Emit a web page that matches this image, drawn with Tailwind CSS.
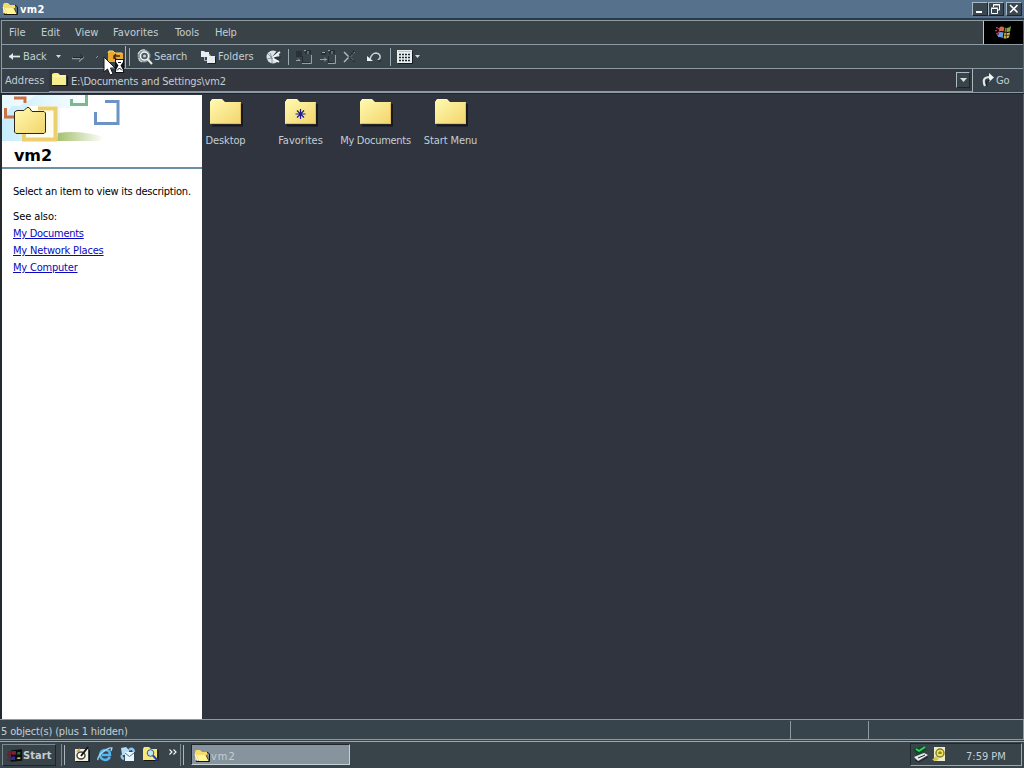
<!DOCTYPE html>
<html lang="en">
<head>
  <meta charset="UTF-8">
  <title>vm2</title>
  <script src="https://cdn.jsdelivr.net/npm/@tailwindcss/browser@4"></script>
</head>
<body class="w-[1024px] h-[768px] overflow-hidden flex flex-col bg-[#374249] text-[#c3ced4] text-[11px] leading-[13px] font-['DejaVu_Sans_Condensed','DejaVu_Sans',sans-serif] whitespace-nowrap">

  <!-- Shared shapes -->
  <svg class="absolute w-0 h-0">
    <defs>
      <linearGradient id="paper" x1="0" y1="0" x2="1" y2="1">
        <stop offset="0" stop-color="#fffbb0"/>
        <stop offset="1" stop-color="#f3d36c"/>
      </linearGradient>
      <linearGradient id="grass" x1="0" y1="0" x2="1" y2="0">
        <stop offset="0" stop-color="#a3c06c"/>
        <stop offset="1" stop-color="#ffffff"/>
      </linearGradient>
      <linearGradient id="sky" x1="0" y1="0" x2="1" y2="0">
        <stop offset="0" stop-color="#c5edfb"/>
        <stop offset="1" stop-color="#ffffff"/>
      </linearGradient>
    </defs>
    <symbol id="folder" viewBox="0 0 34 30">
      <path d="M3 27.500H33V6" fill="none" stroke="#171a1d" stroke-width="2"/>
      <path d="M1 26V4L3 1H13L16 4H32V26Z" fill="url(#paper)"/>
      <path d="M1.500 25.500H31.500V5" fill="none" stroke="#e0bd5f"/>
      <path d="M1.500 4.500L3.500 1.500H12.500L15 4.500" fill="none" stroke="#fff8cf"/>
    </symbol>
    <symbol id="open-folder" viewBox="0 0 16 14">
      <path d="M1 11V3L2 1H6L8 3H13V11Z" fill="#f6dc6d"/>
      <path d="M3 6H12L15 12H5Z" fill="#fff796"/>
      <path d="M2 12.500H15.500V5L13 3" fill="none" stroke="#16140a"/>
      <path d="M1 5L4 12" stroke="#fffad2" fill="none"/>
      <path d="M12 6L15 12" stroke="#4c4418" fill="none"/>
    </symbol>
    <symbol id="flag" viewBox="0 0 18 16">
      <path d="M1 3h2M0 6h2M1 9h2M3 4h2M3 8h2M2 11h2" stroke="#a44452" stroke-width="1.500"/>
      <path d="M5 2Q8 1 10 3L9 7Q7 6 4 7Z" fill="#dc654b"/>
      <path d="M11 3Q14 4 17 1L16 7Q13 8 10 7Z" fill="#81a844"/>
      <path d="M4 8Q6 7 9 8L8 14Q6 12 3 13Z" fill="#6a9ae0"/>
      <path d="M10 8Q13 9 16 8L15 13Q12 15 9 14Z" fill="#cfb443"/>
      <path d="M12 3.500V14M10 11H16" stroke="#2b260c" stroke-width=".8"/>
    </symbol>
    <symbol id="down" viewBox="0 0 5 3"><path d="M0 0H5L2.500 3Z" fill="#d5dde2"/></symbol>
  </svg>

  <!-- Title bar -->
  <header class="h-5 flex items-start bg-[#56718b] border-b-2 border-[#2b394a] shrink-0">
    <svg class="w-4 h-3.5 ml-[2px] mt-[2px]"><use href="#open-folder"/></svg>
    <b class="ml-[2px] mt-[3px] text-white tracking-[0.4px]">vm2</b>
    <div class="ml-auto mr-[2px] mt-[2px] flex">
      <span class="w-4 h-[14px] bg-[#3b4750] border border-t-[#a9bac4] border-l-[#a9bac4] border-r-[#1d252b] border-b-[#1d252b]">
        <svg class="w-[14px] h-3" viewBox="0 0 14 12"><path d="M3 9h6" stroke="#fff" stroke-width="2"/></svg>
      </span>
      <span class="w-4 h-[14px] bg-[#3b4750] border border-t-[#a9bac4] border-l-[#a9bac4] border-r-[#1d252b] border-b-[#1d252b]">
        <svg class="w-[14px] h-3" viewBox="0 0 14 12"><path d="M4.500 4V1.500H10.500V7H8.500M4 2h7M2.500 5.500H8.500V10.500H2.500ZM2 5h7" stroke="#fff" fill="none"/></svg>
      </span>
      <span class="w-4 h-[14px] ml-[2px] bg-[#3b4750] border border-t-[#a9bac4] border-l-[#a9bac4] border-r-[#1d252b] border-b-[#1d252b]">
        <svg class="w-[14px] h-3" viewBox="0 0 14 12"><path d="M3 2L10.500 9.500M10.500 2L3 9.500" stroke="#fff" stroke-width="1.600"/></svg>
      </span>
    </div>
  </header>

  <div class="h-[73px] border border-[#8b9aa3] border-r-[#56636c] shrink-0 ml-px flex flex-col">
    <!-- Menu bar -->
    <nav class="h-[24px] flex items-start border-b border-[#8b9aa3] pl-[7px] bg-[#394347] shrink-0">
      <span class="w-8 mt-[5px]">File</span>
      <span class="w-[34px] mt-[5px]">Edit</span>
      <span class="w-[38px] mt-[5px]">View</span>
      <span class="w-[62px] mt-[5px] tracking-[0.1px]">Favorites</span>
      <span class="w-[40px] mt-[5px]">Tools</span>
      <span class="mt-[5px] tracking-[-0.3px]">Help</span>
      <div class="ml-auto w-[40px] h-[23px] bg-black border-l border-[#b9c6cd] flex items-center justify-center">
        <svg class="w-[17px] h-[15px]"><use href="#flag"/></svg>
      </div>
    </nav>

    <!-- Toolbar -->
    <div class="h-6 flex items-center border-b border-[#8b9aa3] bg-[#38444a] pl-[6px] shrink-0">
      <svg class="w-[13px] h-3" viewBox="0 0 13 12"><path d="M1 5.500H12" stroke="#e3eaee" stroke-width="1.700" fill="none"/><path d="M1 5.500L5 2V9Z" fill="#e3eaee"/></svg>
      <span class="ml-[2px] w-[33px] tracking-[-0.1px]">Back</span>
      <svg class="w-[5px] h-[3px]"><use href="#down"/></svg>
      <svg class="ml-[11px] w-[13px] h-3" viewBox="0 0 13 12"><path d="M0 7.500H8M7 10.500L12 6" stroke="#8a979d" stroke-width="1.300" fill="none"/><path d="M1 6.500H11L8 3" stroke="#1f282c" fill="none"/></svg>
      <svg class="ml-[11px] w-[3px] h-[5px]" viewBox="0 0 3 5"><path d="M0 4L2 2" stroke="#8a979d"/></svg>
      <div class="ml-[5px] w-[22px] h-[22px] border-r border-[#a9b6bd] flex items-center pl-[3px]">
        <svg class="w-[17px] h-[14px]" viewBox="0 0 17 14"><path d="M1 12V3L2 1H6L8 3H16V12Z" fill="#e9a932"/><path d="M1 3L2 1H6L8 3H15" stroke="#ffd66b" fill="none"/><path d="M7 9V6H13M9 4L7 6.500L9 9" stroke="#4a2a08" stroke-width="1.500" fill="none"/></svg>
      </div>
      <div class="ml-[3px] w-px h-[18px] bg-[#9aa8b0]"></div>
      <svg class="ml-[7px] w-4 h-4" viewBox="0 0 16 16"><circle cx="7" cy="7" r="6.500" fill="#8d999e"/><path d="M1 5Q3 0 8 1M2 9Q1 12 5 13" stroke="#e8eef0" fill="none"/><circle cx="7.500" cy="7" r="4" fill="#4b575d" stroke="#f2f5f6" stroke-width="1.500"/><circle cx="7.500" cy="7" r="1.500" fill="#c6d0d4"/><path d="M10.500 10L15 15" stroke="#e6ecef" stroke-width="2"/></svg>
      <span class="ml-[1px] w-[47px] tracking-[-0.15px]">Search</span>
      <svg class="w-[15px] h-[14px]" viewBox="0 0 15 14"><path d="M0 1h3l1 1h4v5H0ZM6 5h3l1 1h4v7H6Z" fill="#e6ecef"/><path d="M3.500 7V10.500H6M8.500 4V6" stroke="#aab5ba" fill="none"/><path d="M14.500 7V13.500H7" stroke="#1b2226" fill="none"/></svg>
      <span class="ml-[2px] w-[47px]">Folders</span>
      <svg class="w-[17px] h-4" viewBox="0 0 17 16"><circle cx="8" cy="8" r="6.500" fill="#dce4e7"/><path d="M8 8L12 3M8 9L15 8L13 11Z" stroke="#2c363b" stroke-width="1.500" fill="#2c363b"/><path d="M7 9L15 3M8 9.500L14 13" stroke="#f3f6f7" stroke-width="1.800"/><path d="M7 9L5 4M7 9V14M7 9L2 10M3 5L7 9" stroke="#7b878d" stroke-width=".8"/></svg>
      <div class="ml-[6px] w-px h-4 bg-[#9aa8b0]"></div>
      <svg class="ml-[7px] w-4 h-[15px]" viewBox="0 0 16 15"><path d="M0 2H6V8H0ZM9 1H15V5H9Z" fill="#273137"/><path d="M0 11.500H4M2 9.500L4 11.500M6 14.500H15.500V6M8 1.500H10M12 5V2" stroke="#94a1a8" fill="none"/><path d="M6.500 7V13.500H13" stroke="#232c31" fill="none"/></svg>
      <svg class="ml-2 w-4 h-[15px]" viewBox="0 0 16 15"><path d="M1 3H6V6H1ZM9 1H15V5H9Z" fill="#273137"/><path d="M0 10.500H7M5 8.500V12.500M8 14.500H15.500V6M8 1.500H10M12 5V2M2 3.500H5" stroke="#94a1a8" fill="none"/><path d="M8.500 7V13.500H13" stroke="#232c31" fill="none"/></svg>
      <svg class="ml-[7px] w-[14px] h-[14px]" viewBox="0 0 14 14"><path d="M1 2L6 7L1 12" stroke="#b5c0c5" stroke-width="1.400" fill="none"/><path d="M11 1L6 7L12 12" stroke="#1d2529" stroke-width="1.300" fill="none" stroke-dasharray="1.500 1"/><path d="M12 2L7.500 7L11 11" stroke="#8b989e" fill="none" stroke-dasharray="1 1"/></svg>
      <svg class="ml-[10px] w-[15px] h-3" viewBox="0 0 15 12"><path d="M3 8Q5 2 9 2Q14 3 13 7L11 9" stroke="#c8d2d7" stroke-width="1.500" fill="none"/><path d="M0 5V10H6Z" fill="#eef3f5"/><path d="M11 10H14" stroke="#1d2529"/></svg>
      <div class="ml-2 w-px h-[18px] bg-[#9aa8b0]"></div>
      <svg class="ml-[6px] w-4 h-[14px]" viewBox="0 0 16 14"><path d="M0 0H15V13H0Z" fill="#e9eff1"/><path d="M2 4.500H14M2 7.500H14M2 10.500H14" stroke="#1f282d" stroke-width="1.400" stroke-dasharray="2 1"/><path d="M1 1.500H14" stroke="#b7c3c8"/><path d="M15.500 1V13.500H1" stroke="#171d20" fill="none"/></svg>
      <svg class="ml-[2px] w-[5px] h-[3px]"><use href="#down"/></svg>
    </div>

    <!-- Address bar -->
    <div class="grow flex bg-[#343740]">
      <span class="w-[47px] pt-[5px] pl-[3px] bg-[#373f48]">Address</span>
      <div class="grow flex border-b border-[#8b9aa3]">
        <svg class="ml-[3px] mt-[3px] w-4 h-[15px]" viewBox="0 0 16 15"><path d="M1 13.500H15.500V4" stroke="#15181a" fill="none"/><path d="M0 13V2L2 1H6L8 3H14V13Z" fill="#f4ee8c"/><path d="M1 4H13" stroke="#fffccb"/></svg>
        <span class="ml-[3px] mt-[6px] tracking-[-0.18px]">E:\Documents and Settings\vm2</span>
        <div class="ml-auto mt-[3px] mr-[2px] w-[14px] h-4 flex items-center justify-center bg-[#38444a] border border-t-[#a9bac4] border-l-[#a9bac4] border-r-[#1d252b] border-b-[#1d252b]">
          <svg class="w-[7px] h-[4px]" viewBox="0 0 5 3" preserveAspectRatio="none"><use href="#down" width="5" height="3"/></svg>
        </div>
      </div>
      <div class="w-[51px] flex bg-[#38424a] border-l border-[#a9b6bd]">
        <svg class="ml-[9px] mt-[4px] w-[14px] h-3.5" viewBox="0 0 14 14"><path d="M3 13Q-1 4 8 4" stroke="#dfe6e9" stroke-width="2.200" fill="none"/><path d="M7 0L12 4.500L7 9Z" fill="#f2f5f6"/><path d="M5 13Q3 8 8 7" stroke="#11171a" fill="none"/></svg>
        <span class="mt-[5px] tracking-[-0.2px]">Go</span>
      </div>
    </div>
  </div>
  <div class="h-px bg-[#1e252b] shrink-0"></div>

  <!-- Folder view -->
  <main class="h-[625px] flex shrink-0 border-l-2 border-[#24292e] border-r border-r-[#56636c] bg-[#30343f]">
    <aside class="w-[200px] mt-px bg-white text-black">
      <div class="h-[74px] border-b-2 border-[#6b8fa3] relative">
        <svg class="w-[200px] h-[48px]" viewBox="2 95 200 48">
          <path d="M2 95H90V108H60V141H2Z" fill="url(#sky)"/>
          <path d="M28 106H54V138H24V120Z" fill="#fffdf2"/>
          <path d="M2 95H36L20 106H12L2 120Z" fill="#fff" opacity=".6"/>
          <path d="M58 133Q80 130 104 137L100 141H57Z" fill="url(#grass)"/>
          <path d="M14 98H25V103M5.500 108V117H15" stroke="#cc7048" stroke-width="3" fill="none"/>
          <path d="M71.500 99V104.500H86.500V95" stroke="#79b98d" stroke-width="3" fill="none"/>
          <path d="M105 101.500H118V123.500H95.500V112" stroke="#6b93c5" stroke-width="3" fill="none"/>
          <path d="M38 108.500H55.500V139.500H24V132" stroke="#ecd06e" stroke-width="4" fill="none"/>
          <path d="M14.500 132V112L17 110.500H24L27 107.500H29L32 111.500H44L45.500 113V132L44 133.500H16Z" fill="url(#paper)" stroke="#2c2718"/>
        </svg>
        <b class="absolute left-3 top-[52px] text-[16px] leading-[18px] font-['DejaVu_Sans'] tracking-[-0.1px]">vm2</b>
      </div>
      <div class="pl-[11px] flex flex-col items-start">
        <p class="mt-4 tracking-[-0.23px]">Select an item to view its description.</p>
        <p class="mt-3 tracking-[-0.1px]">See also:</p>
        <a class="mt-1 text-[#0808c0] underline tracking-[-0.27px]">My Documents</a>
        <a class="mt-1 text-[#0808c0] underline tracking-[-0.17px]">My Network Places</a>
        <a class="mt-1 text-[#0808c0] underline tracking-[-0.2px]">My Computer</a>
      </div>
    </aside>

    <div class="flex items-start pt-[4px] -ml-[14px]">
      <div class="w-[75px] flex flex-col items-center">
        <svg class="w-[34px] h-[30px]"><use href="#folder"/></svg>
        <span class="mt-[6px] tracking-[-0.1px]">Desktop</span>
      </div>
      <div class="w-[75px] flex flex-col items-center">
        <svg class="w-[34px] h-[30px]"><use href="#folder"/><path d="M16.500 11V21M11.500 16H21.500M13 12.500L20 19.500M20 12.500L13 19.500" stroke="#1c1c90" stroke-width="1.200"/></svg>
        <span class="mt-[6px]">Favorites</span>
      </div>
      <div class="w-[75px] flex flex-col items-center">
        <svg class="w-[34px] h-[30px]"><use href="#folder"/></svg>
        <span class="mt-[6px] tracking-[-0.27px]">My Documents</span>
      </div>
      <div class="w-[75px] flex flex-col items-center">
        <svg class="w-[34px] h-[30px]"><use href="#folder"/></svg>
        <span class="mt-[6px] tracking-[-0.1px]">Start Menu</span>
      </div>
    </div>
  </main>

  <!-- Status bar -->
  <footer class="h-[21px] flex border-y border-[#8b9aa3] border-r bg-[#38444c] shrink-0">
    <span class="w-[791px] mt-[1px] pl-px pt-[4px] border-r border-[#8b9aa3] tracking-[-0.15px]">5 object(s) (plus 1 hidden)</span>
    <span class="w-[78px] mt-[1px] border-r border-[#8b9aa3]"></span>
  </footer>

  <!-- Taskbar -->
  <div class="grow flex items-start bg-[#39434a] border-t border-[#9aa8b0] mt-px">
    <button class="ml-[2px] mt-[2px] w-[54px] h-[22px] flex items-center border border-t-[#7b8991] border-l-[#7b8991] border-r-[#1d252b] border-b-[#1d252b] pl-[4px] font-bold">
      <svg class="w-[16px] h-[15px]" viewBox="0 0 18 16"><path d="M1 4h4M0 7h4M1 10h3M0 13h3" stroke="#71192b" stroke-width="1.800"/><path d="M5 2L17 1V14L4 15Z" fill="#0b0c0e"/><path d="M5 3H10V7H5Z" fill="#8a2030"/><path d="M12 4H15V7H11Z" fill="#2c6a3a"/><path d="M5 9H9V13H4Z" fill="#2c2c9c"/><path d="M12 10H15V12H11Z" fill="#c4bb4c"/></svg>
      <span class="tracking-[0.1px]">Start</span>
    </button>
    <div class="ml-[5px] mt-[2px] w-px h-[22px] bg-[#7d8b93]"></div>
    <div class="ml-[2px] mt-[3px] w-[2px] h-[20px] border-l border-[#a9b6bd]"></div>
    <svg class="ml-[8px] mt-[4px] w-4 h-4" viewBox="0 0 16 16"><path d="M1 3H14V15H1Z" fill="#f3efdc"/><path d="M2 15.500H15.500V4" stroke="#101315" fill="none"/><ellipse cx="7" cy="9.500" rx="4" ry="3.500" fill="#fff" stroke="#4b4a35" stroke-width="1.500"/><path d="M7 10L14 1" stroke="#141414" stroke-width="2"/><path d="M3 6L6 3" stroke="#d1ae55" stroke-width="2"/></svg>
    <svg class="ml-[7px] mt-[4px] w-4 h-4" viewBox="0 0 16 16"><path d="M13 11Q11 14 8 14Q3 13 3 8.500Q4 4 8.500 4Q13 4 13 9H5" stroke="#55b6f2" stroke-width="2.500" fill="none"/><path d="M1 14Q0 11 6 6Q12 1 15 2L14 5" stroke="#a6dcfa" stroke-width="1.300" fill="none"/></svg>
    <svg class="ml-[7px] mt-[4px] w-4 h-4" viewBox="0 0 16 16"><path d="M1 2L6 1L9 4V9H2Z" fill="#b7dcf4"/><path d="M5 6H14V15H5Z" fill="#eaf4fb"/><path d="M5 7L9.500 10.500L14 7" stroke="#3d7fc0" fill="none"/><path d="M9 4Q13 1 14 6M2 9Q1 12 4 13" stroke="#8cc6f0" stroke-width="2.500" fill="none"/></svg>
    <svg class="ml-[7px] mt-[4px] w-4 h-4" viewBox="0 0 16 16"><path d="M0 14V3L1 1H6L8 3H14V14Z" fill="#f7e87c"/><path d="M1 14.500H15V4" stroke="#15130b" fill="none"/><circle cx="7.500" cy="7" r="3.300" fill="#bfe6f5" stroke="#3a5c7a"/><path d="M10 9.500L14.500 14.500" stroke="#2444a4" stroke-width="2"/></svg>
    <svg class="ml-[10px] mt-[7px] w-2 h-[6px]" viewBox="0 0 8 6"><path d="M0.500 0.500L3 3L0.500 5.500M4.500 0.500L7 3L4.500 5.500" stroke="#eef3f5" stroke-width="1.200" fill="none"/></svg>
    <div class="ml-[3px] mt-[2px] w-px h-[22px] bg-[#7d8b93]"></div>
    <div class="ml-[2px] mt-[3px] w-[2px] h-[20px] border-l border-[#a9b6bd]"></div>
    <div class="ml-[6px] mt-[2px] w-[159px] h-[21px] flex bg-[#87949d] border border-t-[#20272c] border-l-[#20272c] border-[#c6d1d7] pl-[2px] pt-[4px]">
      <svg class="w-4 h-3.5"><use href="#open-folder"/></svg>
      <span class="ml-px mt-px text-[#c3ced8] tracking-[1px]">vm2</span>
    </div>
    <div class="ml-auto mr-[2px] mt-[1px] w-[112px] h-[23px] flex border border-t-[#20272c] border-l-[#20272c] border-[#9aa8b0]">
      <svg class="ml-[2px] mt-[2px] w-4 h-[17px]" viewBox="0 0 16 17"><path d="M0 3L10 0L14 4L4 9Z" fill="#0d4d22"/><path d="M3 3L6 5L12 1" stroke="#39d367" stroke-width="1.800" fill="none"/><path d="M1 11L11 7L15 9L5 15Z" fill="#e8ecee"/><path d="M2 14L6 16L15 11M5 12L12 9" stroke="#1b2022" fill="none"/></svg>
      <svg class="ml-[3px] mt-[2px] w-[15px] h-4" viewBox="0 0 15 16"><path d="M2 1H13V15H2Z" fill="#efebce"/><circle cx="8" cy="7" r="4" fill="#eee75d" stroke="#817b23" stroke-width="1.400"/><path d="M6 7H10M8 5V8" stroke="#69641f"/><path d="M0 14L4 10L7 13L4 15Z" fill="#cfc748"/></svg>
      <span class="ml-[19px] mt-[6px]">7:59 PM</span>
    </div>
  </div>

  <!-- Busy cursor -->
  <svg class="absolute left-[103px] top-[56px] w-[22px] h-[20px]" viewBox="0 0 22 20">
    <path d="M1 1V16L4.500 13L7 19L10 18L7.500 12H12Z" fill="#fff" stroke="#14181a"/>
    <path d="M12 3H21V17H12Z" fill="#101315"/>
    <path d="M13 4H20V6L17.500 9.500L20 14V16H13V14L15.500 9.500L13 6Z" fill="#fff"/>
    <path d="M15 6.500H18M14 14.500L16.500 12L19 14.500" stroke="#101315" fill="none"/>
  </svg>

</body>
</html>
